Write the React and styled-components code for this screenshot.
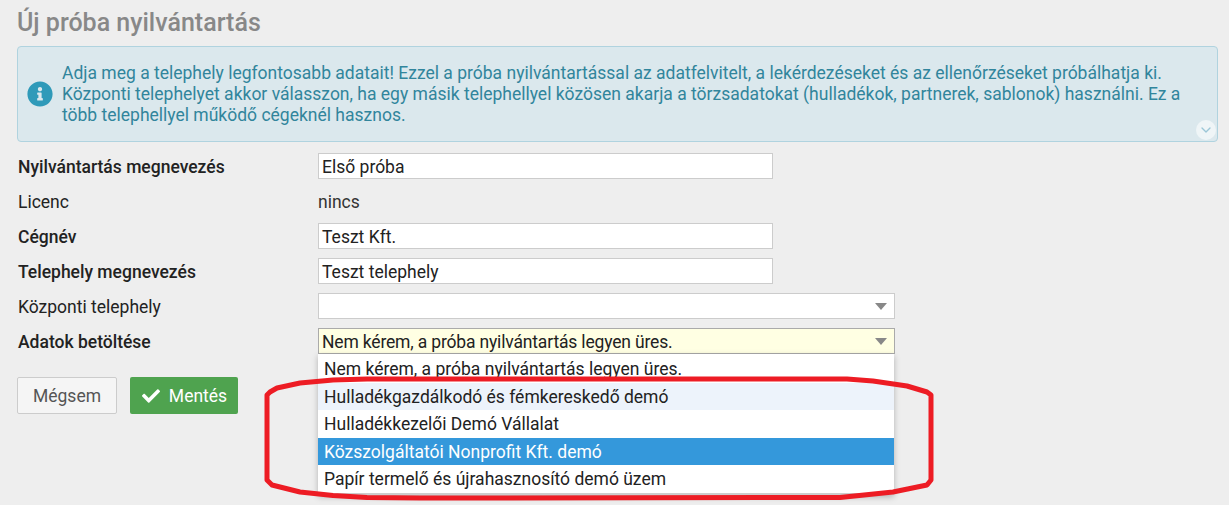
import React from 'react';
import styled, { createGlobalStyle } from 'styled-components';
import { FaInfoCircle, FaCheck } from 'react-icons/fa';
import { FiChevronDown } from 'react-icons/fi';

const GlobalStyle = createGlobalStyle`
    html, body {
        margin: 0;
        padding: 0;
        background: #eeeeee;
        font-family: Roboto, "Liberation Sans", sans-serif;
        font-size: 17.5px;
        color: #222;
    }
`;

const options = [
    'Nem kérem, a próba nyilvántartás legyen üres.',
    'Hulladékgazdálkodó és fémkereskedő demó',
    'Hulladékkezelői Demó Vállalat',
    'Közszolgáltatói Nonprofit Kft. demó',
    'Papír termelő és újrahasznosító demó üzem',
];

function App() {
    return (
        <Page>
            <GlobalStyle />
            <Title>Új próba nyilvántartás</Title>
            <Alert>
                <AlertIcon><FaInfoCircle /></AlertIcon>
                <AlertText>
                    Adja meg a telephely legfontosabb adatait! Ezzel a próba nyilvántartással az adatfelvitelt, a lekérdezéseket és az ellenőrzéseket próbálhatja ki.
                    Központi telephelyet akkor válasszon, ha egy másik telephellyel közösen akarja a törzsadatokat (hulladékok, partnerek, sablonok) használni. Ez a több telephellyel működő cégeknél hasznos.
                </AlertText>
                <MoreButton><FiChevronDown /></MoreButton>
            </Alert>
            <Form>
                <Row>
                    <Label $bold>Nyilvántartás megnevezés</Label>
                    <TextInput>Első próba</TextInput>
                </Row>
                <Row>
                    <Label>Licenc</Label>
                    <PlainValue>nincs</PlainValue>
                </Row>
                <Row>
                    <Label $bold>Cégnév</Label>
                    <TextInput>Teszt Kft.</TextInput>
                </Row>
                <Row>
                    <Label $bold>Telephely megnevezés</Label>
                    <TextInput>Teszt telephely</TextInput>
                </Row>
                <Row>
                    <Label>Központi telephely</Label>
                    <Select>
                        <SelectValue />
                        <Caret />
                    </Select>
                </Row>
                <Row>
                    <Label $bold>Adatok betöltése</Label>
                    <SelectWrap>
                        <Select $open>
                            <SelectValue>{options[0]}</SelectValue>
                            <Caret />
                        </Select>
                        <Menu>
                            {options.map((o, i) => (
                                <Option key={o} $hover={i === 1} $selected={i === 3}>{o}</Option>
                            ))}
                        </Menu>
                    </SelectWrap>
                </Row>
            </Form>
            <Buttons>
                <CancelBtn>Mégsem</CancelBtn>
                <SaveBtn><FaCheck /> Mentés</SaveBtn>
            </Buttons>
            <Marker viewBox="0 0 1229 505" width="1229" height="505">
                <path
                    d="M267 395 L270 392 L277 388 L300 383 L333 380 L367 379 L847 379 L873 381 L907 386 L927 392 L931 395 L931 480 L927 485 L893 492 L840 497.5 L420 498 L367 497.5 L333 495.5 L300 492 L272 485 L267 480 Z"
                    fill="none"
                    stroke="#ed1c24"
                    strokeWidth="5"
                    strokeLinejoin="round"
                />
            </Marker>
        </Page>
    );
}

const Page = styled.div`
    position: relative;
    width: 1229px;
    height: 505px;
    overflow: hidden;
    padding: 11px 11px 0 17px;
    box-sizing: border-box;
`;

const Title = styled.h1`
    margin: 0 0 11px 0;
    font-size: 25px;
    line-height: 24px;
    font-weight: 500;
    color: #888;
`;

const Alert = styled.div`
    position: relative;
    display: flex;
    align-items: center;
    height: 96px;
    box-sizing: border-box;
    padding: 0 22px 0 9px;
    background: #dbe8ed;
    border: 1px solid #b0d3df;
    border-radius: 4px;
    color: #31859c;
    line-height: 21px;
`;

const AlertIcon = styled.div`
    display: flex;
    font-size: 26px;
    color: #2f9ab9;
    margin-right: 9px;
    flex: none;
`;

const AlertText = styled.div`
    flex: 1;
`;

const MoreButton = styled.div`
    position: absolute;
    right: 1px;
    bottom: 1px;
    width: 20px;
    height: 20px;
    border-radius: 50%;
    background: #eff5f7;
    color: #9cc6d6;
    display: flex;
    align-items: center;
    justify-content: center;
    font-size: 16px;
`;

const Form = styled.div`
    display: flex;
    flex-direction: column;
    gap: 9px;
    margin-top: 11px;
`;

const Row = styled.div`
    display: flex;
    align-items: center;
    height: 26px;
`;

const Label = styled.div`
    width: 300px;
    padding: 2px 0 0 1px;
    font-weight: ${(p) => (p.$bold ? 500 : 400)};
    color: #222;
`;

const TextInput = styled.div`
    width: 455px;
    height: 26px;
    box-sizing: border-box;
    background: #fff;
    border: 1px solid #ccc;
    padding: 0 3px;
    line-height: 27px;
    color: #222;
`;

const PlainValue = styled.div`
    padding-top: 2px;
    color: #333;
`;

const SelectWrap = styled.div`
    position: relative;
`;

const Select = styled.div`
    width: 577px;
    height: 26px;
    box-sizing: border-box;
    display: flex;
    align-items: center;
    justify-content: space-between;
    padding: 2px 7px 0 3px;
    background: ${(p) => (p.$open ? '#ffffe3' : '#fff')};
    border: 1px solid ${(p) => (p.$open ? '#aaa' : '#ccc')};
`;

const SelectValue = styled.div`
    flex: 1;
    white-space: nowrap;
    letter-spacing: -0.17px;
`;

const Caret = styled.span`
    width: 0;
    height: 0;
    margin-top: -2px;
    border-left: 6px solid transparent;
    border-right: 6px solid transparent;
    border-top: 7px solid #888;
`;

const Menu = styled.div`
    position: absolute;
    top: 26px;
    left: 0;
    width: 576px;
    background: #fff;
    border-bottom: 2px solid #ccc;
    box-shadow: 0 2px 6px rgba(0, 0, 0, 0.25);
    padding-top: 1px;
    z-index: 2;
`;

const Option = styled.div`
    height: 27.5px;
    box-sizing: border-box;
    padding: 1px 0 0 6px;
    line-height: 27.5px;
    color: ${(p) => (p.$selected ? '#fff' : '#222')};
    background: ${(p) => (p.$selected ? '#3498db' : p.$hover ? '#edf3fb' : '#fff')};
`;

const Buttons = styled.div`
    display: flex;
    gap: 13px;
    margin-top: 23px;
`;

const CancelBtn = styled.div`
    width: 100px;
    height: 37px;
    box-sizing: border-box;
    display: flex;
    align-items: center;
    justify-content: center;
    background: #f5f5f5;
    border: 1px solid #ccc;
    border-radius: 2px;
    color: #555;
`;

const SaveBtn = styled.div`
    width: 108px;
    height: 37px;
    box-sizing: border-box;
    display: flex;
    align-items: center;
    justify-content: center;
    gap: 9px;
    padding-left: 1px;
    background: #4fa34f;
    border-radius: 2px;
    color: #fff;
    svg {
        font-size: 18px;
    }
`;

const Marker = styled.svg`
    position: absolute;
    top: 0;
    left: 0;
    z-index: 3;
    pointer-events: none;
`;

export default App;
